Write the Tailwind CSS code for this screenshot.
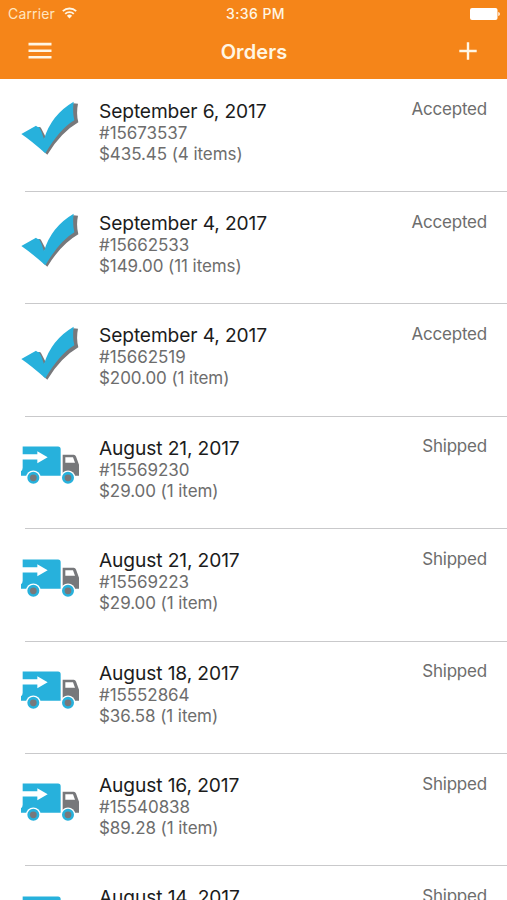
<!DOCTYPE html>
<html lang="en">
<head>
    <meta charset="UTF-8">
    <meta name="viewport" content="width=device-width, initial-scale=1.0">
    <title>Orders</title>
    <script src="https://cdn.jsdelivr.net/npm/@tailwindcss/browser@4"></script>
</head>
<body class="bg-white font-['Inter',sans-serif] h-[900px] overflow-hidden">
    <header class="h-[79px] bg-[#f58519] text-[#fff6e4]">
        <!-- Status bar -->
        <div class="grid grid-cols-3 items-center h-[27px] pl-2 pr-[7px] text-[14px]">
            <div class="flex items-center gap-[7px] text-[#ffe5c0]">
                <span class="tracking-[0.15px]">Carrier</span>
                <svg class="w-[15px] h-[12px] -mt-0.5" viewBox="0 0 15 12" fill="none" stroke="#fff6e4" stroke-width="1.8">
                    <path d="M.8 4.2a9.6 9.6 0 0 1 13.4 0M3.2 6.8a6.2 6.2 0 0 1 8.6 0"/>
                    <path d="M7.5 11.6 4.9 8.8a3.8 3.8 0 0 1 5.2 0z" fill="#fff6e4" stroke="none"/>
                </svg>
            </div>
            <span class="pl-[3px] text-center font-medium text-[14px] tracking-[0.4px]">3:36 PM</span>
            <svg class="justify-self-end w-[30px] h-[12px]" viewBox="0 0 30 12" fill="#fff">
                <rect x="0" y="0" width="27.5" height="12" rx="2"/>
                <path d="M28.3 4c2 .4 2 3.6 0 4z"/>
            </svg>
        </div>
        <!-- Nav bar -->
        <div class="grid grid-cols-3 items-center h-12 pl-7 pr-[30px]">
            <button class="justify-self-start" aria-label="Menu">
                <svg class="w-6 h-[18px]" viewBox="0 0 24 18" fill="#fff6e4">
                    <path d="M.5 .8h23v2.7H.5zM.5 7.4h23v2.7H.5zM.5 13.9h23v2.7H.5z"/>
                </svg>
            </button>
            <h1 class="pt-0.5 pl-[3px] text-center text-[20px] font-semibold tracking-[0.1px]">Orders</h1>
            <button class="justify-self-end" aria-label="Add order">
                <svg class="w-[18px] h-[18px]" viewBox="0 0 18 18" fill="none" stroke="#fff6e4" stroke-width="2.4">
                    <path d="M9 .3v17.4M.3 9h17.4"/>
                </svg>
            </button>
        </div>
    </header>

    <ul id="orders"></ul>

    <template id="icon-Accepted">
        <svg class="w-[60px] h-14 shrink-0" viewBox="30 30 180 168">
            <path fill="#77787b" d="M84 112q7-2 9 2l14 27-8 12zM190 40l14 1q-6 28 1 56-52 30-93 97l-12-10z"/>
            <path fill="#27b1dc" d="M34 132 78 107q4 5 9 4 9 14 15 36Q124 74 191 35q-4 32 2 56-44 26-87 99Q66 154 34 132z"/>
        </svg>
    </template>
    <template id="icon-Shipped">
        <svg class="w-[60px] h-14 shrink-0" viewBox="30 6.6 180 168">
            <path fill="#27b1dc" d="M38 35h106q8 0 8 8v80H33v-14q5-3 5-10z"/>
            <path fill="#fff" d="M36 58h46V49l31 18-31 18V74H36z"/>
            <path fill="#77787b" fill-rule="evenodd" d="M158 60h33q5 0 7 5l9 25v33h-49zM166 67v17h29l-6-17z"/>
            <circle cx="70" cy="129" r="22" fill="#fff"/>
            <circle cx="174" cy="129" r="22" fill="#fff"/>
            <circle cx="70" cy="129" r="14" fill="#77787b" stroke="#27b1dc" stroke-width="8"/>
            <circle cx="174" cy="129" r="14" fill="#77787b" stroke="#27b1dc" stroke-width="8"/>
        </svg>
    </template>

    <script>
        const orders = [
            { date: 'September 6, 2017', number: '#15673537', total: '$435.45 (4 items)', status: 'Accepted' },
            { date: 'September 4, 2017', number: '#15662533', total: '$149.00 (11 items)', status: 'Accepted' },
            { date: 'September 4, 2017', number: '#15662519', total: '$200.00 (1 item)', status: 'Accepted' },
            { date: 'August 21, 2017', number: '#15569230', total: '$29.00 (1 item)', status: 'Shipped' },
            { date: 'August 21, 2017', number: '#15569223', total: '$29.00 (1 item)', status: 'Shipped' },
            { date: 'August 18, 2017', number: '#15552864', total: '$36.58 (1 item)', status: 'Shipped' },
            { date: 'August 16, 2017', number: '#15540838', total: '$89.28 (1 item)', status: 'Shipped' },
            { date: 'August 14, 2017', number: '', total: '', status: 'Shipped' },
        ];

        const list = document.getElementById('orders');

        orders.forEach(order => {
            const row = document.createElement('li');
            row.className = 'h-[112.4px] flex flex-col';
            row.innerHTML = `
                <div class="h-[112px] shrink-0 flex items-start px-5 pt-[21px]">
                    ${document.getElementById('icon-' + order.status).innerHTML}
                    <div class="flex-1 pl-[19px] -mt-[0.4px] text-[17px] leading-[21px] tracking-[-0.07px] text-[#6d6d6d]">
                        <div class="text-[19.2px] leading-[23px] tracking-[-0.12px] text-[#1c1c1c]">${order.date}</div>
                        <div>${order.number}</div>
                        <div>${order.total}</div>
                    </div>
                    <div class="-mt-[0.8px] text-[17px] leading-[21px] tracking-[-0.2px] text-[#6d6d6d]">${order.status}</div>
                </div>
                <div class="ml-[25px] h-px shrink-0 bg-[#c9c9cb]"></div>`;
            list.appendChild(row);
        });
    </script>
</body>
</html>
